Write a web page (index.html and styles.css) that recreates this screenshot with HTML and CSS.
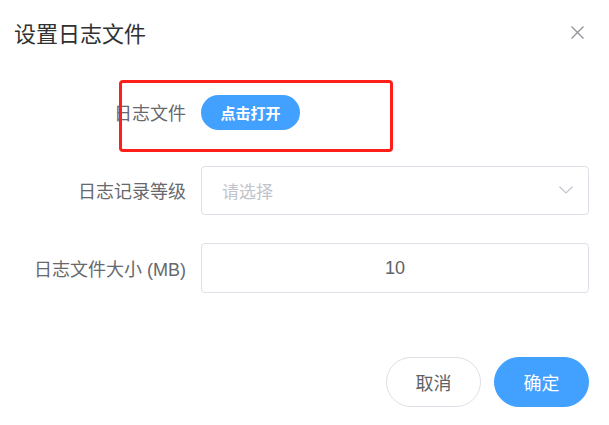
FILE: index.html
```html
<!DOCTYPE html>
<html lang="zh-CN">

<head>
  <meta charset="utf-8">
  <title>设置日志文件</title>
  <meta name="viewport" content="width=device-width,initial-scale=1">
  <link rel="stylesheet" href="styles.css">
</head>

<body>
  <div class="log-dialog">
    <div class="log-dialog-header">
      <span class="log-dialog-title">设置日志文件</span>
      <button class="log-dialog-close" type="button" aria-label="关闭">
        <svg width="13" height="13" viewBox="0 0 13 13">
          <path d="M0.5 0.5 L12.5 12.5 M12.5 0.5 L0.5 12.5" stroke="#909399" stroke-width="1.3" fill="none" />
        </svg>
      </button>
    </div>

    <form class="log-form">
      <div class="form-item">
        <label class="form-label">日志文件</label>
        <div class="form-content">
          <button class="btn-open" type="button">点击打开</button>
        </div>
      </div>
      <div class="form-item">
        <label class="form-label">日志记录等级</label>
        <div class="form-content">
          <div class="select-box">
            <span class="select-placeholder">请选择</span>
            <svg class="select-arrow" width="14" height="8" viewBox="0 0 14 8">
              <polyline points="0.5,0.8 7,7 13.5,0.8" stroke="#c0c4cc" stroke-width="1.2" fill="none" />
            </svg>
          </div>
        </div>
      </div>
      <div class="form-item">
        <label class="form-label">日志文件大小 (MB)</label>
        <div class="form-content">
          <input class="number-input" type="text" value="10">
        </div>
      </div>
    </form>

    <div class="log-dialog-footer">
      <button class="btn btn-default" type="button">取消</button>
      <button class="btn btn-primary" type="button">确定</button>
    </div>

    <!-- highlight frame drawn over the first row -->
    <div class="mark-frame"></div>
  </div>
</body>

</html>
```

FILE: styles.css
```css
html,
body {
  margin: 0;
  padding: 0;
  background-color: #fff;
}

body {
  font-family: "Liberation Sans", "Noto Sans CJK SC", sans-serif;
  color: #606266;
}

.log-dialog {
  position: relative;
  width: 609px;
  height: 425px;
  box-sizing: border-box;
  padding: 0 20px 0 14px;
}

.log-dialog-header {
  display: flex;
  align-items: center;
  justify-content: space-between;
  padding-top: 18px;
}

.log-dialog-title {
  font-size: 22px;
  line-height: 33px;
  color: #303133;
}

.log-dialog-close {
  display: flex;
  padding: 0;
  margin: 0 5px 4px 0;
  border: 0;
  background: transparent;
  cursor: pointer;
}

.log-form {
  margin-top: 36px;
}

.form-item {
  display: flex;
  align-items: center;
  height: 50px;
  margin-bottom: 28px;
}

.form-item:last-child {
  margin-bottom: 0;
}

.form-label {
  width: 172px;
  padding-right: 15px;
  text-align: right;
  font-size: 18px;
  color: #66686d;
  white-space: nowrap;
}

.form-content {
  flex: 1;
  display: flex;
  align-items: center;
}

.btn-open {
  width: 99px;
  height: 35px;
  border: 0;
  border-radius: 18px;
  background-color: #42a0ff;
  color: #fff;
  font-family: inherit;
  font-size: 15px;
  font-weight: bold;
  cursor: pointer;
}

.select-box {
  flex: 1;
  display: flex;
  align-items: center;
  justify-content: space-between;
  height: 49px;
  box-sizing: border-box;
  padding: 0 15px 0 20px;
  border: 1px solid #dcdfe6;
  border-radius: 4px;
}

.select-placeholder {
  font-size: 17px;
  color: #c0c4cc;
}

.number-input {
  flex: 1;
  height: 50px;
  box-sizing: border-box;
  border: 1px solid #dcdfe6;
  border-radius: 4px;
  outline: none;
  text-align: center;
  font-family: inherit;
  font-size: 18px;
  color: #606266;
}

.log-dialog-footer {
  display: flex;
  justify-content: flex-end;
  gap: 13px;
  margin-top: 64px;
}

.btn {
  width: 95px;
  height: 50px;
  border-radius: 25px;
  font-family: inherit;
  font-size: 18px;
  cursor: pointer;
}

.btn-default {
  border: 1px solid #dcdfe6;
  background-color: #fff;
  color: #606266;
}

.btn-primary {
  border: 1px solid #42a0ff;
  background-color: #42a0ff;
  color: #fff;
}

.mark-frame {
  position: absolute;
  left: 119px;
  top: 80px;
  width: 274px;
  height: 72px;
  box-sizing: border-box;
  border: 3px solid #ff1f1a;
  border-radius: 4px;
  pointer-events: none;
}
```
